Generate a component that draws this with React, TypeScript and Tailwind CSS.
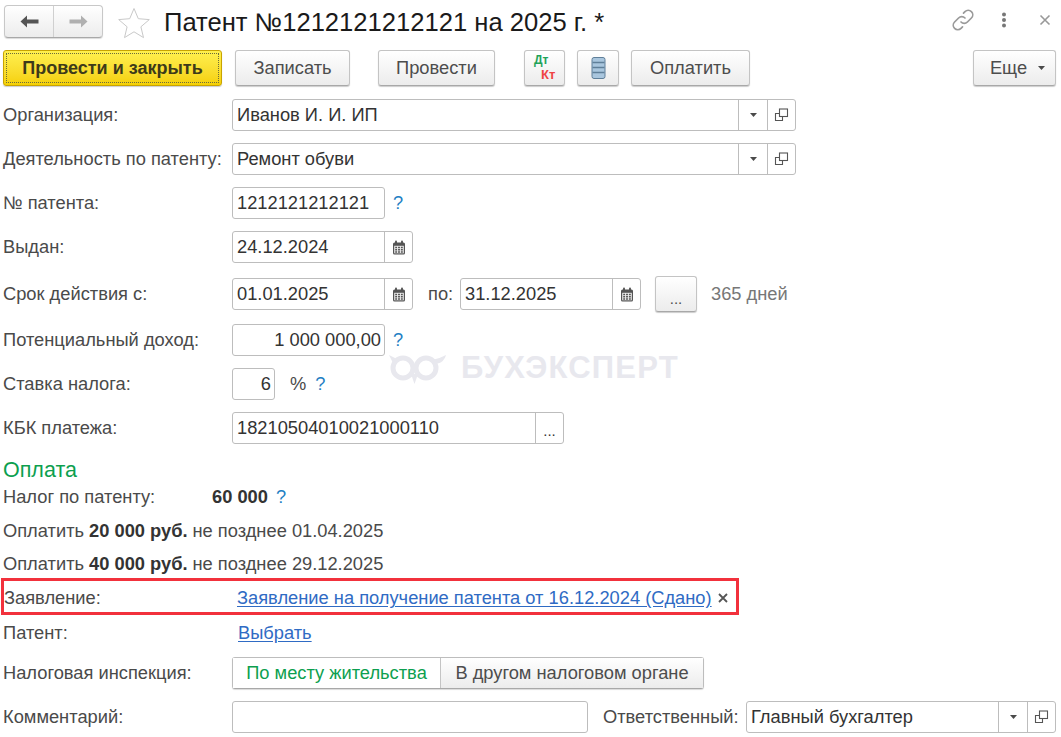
import type { ReactNode } from "react"

const btn =
  "flex h-9 items-center justify-center rounded-[3px] border border-[#c4c4c4] border-b-[#a8a8a8] bg-gradient-to-b from-white to-[#ececec] text-[#4d4d4d] shadow-[0_1px_1px_rgba(0,0,0,0.2)]"
const field = "flex h-8 items-center rounded-[3px] border border-[#bdbdbd] bg-white text-[#333]"

function Arrow({ dir, color }: { dir: "left" | "right"; color: string }) {
  return (
    <svg width="19" height="13" viewBox="0 0 19 13" className={dir === "right" ? "rotate-180" : ""}>
      <path d="M0.500 6.500L7 0.500v4h11.500v4H7v4z" fill={color} />
    </svg>
  )
}

function Caret() {
  return (
    <svg width="7" height="4" viewBox="0 0 7 4">
      <path d="M0 0h7L3.500 4z" fill="#4a4a4a" />
    </svg>
  )
}

function CopyIcon() {
  return (
    <svg width="15" height="14" viewBox="0 0 15 14" fill="none" stroke="#555" strokeWidth="1.1">
      <rect x="5.5" y="1" width="8" height="7.5" />
      <path d="M5.5 5.5H1.5V12.5H8.5V8.5" />
    </svg>
  )
}

function CalendarIcon() {
  return (
    <svg width="14" height="15" viewBox="0 0 14 15">
      <rect x="1" y="2.5" width="12" height="12" rx="1.5" fill="#555" />
      <rect x="2.2" y="5.8" width="9.6" height="7.500" fill="#eee" />
      <rect x="3" y="0.5" width="2" height="4" rx="1" fill="#555" />
      <rect x="9" y="0.5" width="2" height="4" rx="1" fill="#555" />
      <path d="M3.200 6.800h1.900v1.500H3.200zM6.050 6.800h1.900v1.500H6.050zM8.900 6.800h1.900v1.500H8.900zM3.200 9.100h1.900v1.500H3.200zM6.050 9.100h1.900v1.500H6.050zM8.900 9.100h1.900v1.500H8.900zM3.200 11.300h1.900v1.400H3.200zM6.050 11.300h1.900v1.400H6.050zM8.900 11.300h1.900v1.400H8.900z" fill="#555" />
    </svg>
  )
}

function Hint({ className }: { className?: string }) {
  return <span className={`text-[#1f7fc4] ${className ?? ""}`}>?</span>
}

function Label({ children }: { children: ReactNode }) {
  return <span className="w-[229px] shrink-0 whitespace-nowrap text-[#4a4a4a]">{children}</span>
}

function Row({ className, children }: { className: string; children: ReactNode }) {
  return <div className={`flex items-center ${className}`}>{children}</div>
}

function SelectField({ value, className }: { value: string; className: string }) {
  return (
    <div className={`${field} ${className}`}>
      <span className="flex-1 pl-1 whitespace-nowrap">{value}</span>
      <span className="flex h-full w-[29px] items-center justify-center border-l border-[#bdbdbd]"><Caret /></span>
      <span className="flex h-full w-7 items-center justify-center border-l border-[#bdbdbd]"><CopyIcon /></span>
    </div>
  )
}

function DateField({ value, className }: { value: string; className?: string }) {
  return (
    <div className={`${field} w-[181px] ${className ?? ""}`}>
      <span className="flex-1 pl-1">{value}</span>
      <span className="flex h-full w-7 items-center justify-center border-l border-[#bdbdbd]"><CalendarIcon /></span>
    </div>
  )
}

export default function App() {
  return (
    <div className="relative h-[737px] w-[1061px] overflow-hidden bg-white font-['Liberation_Sans',Arial,sans-serif] text-[18.3px] text-[#333]">
      {/* Header */}
      <div className="flex h-[50px] items-start pt-[5px] pl-1">
        <div className="flex h-[33px] w-[99px] rounded-[4px] border border-[#c8c8c8] border-b-[#a8a8a8] bg-gradient-to-b from-white to-[#ececec] shadow-[0_1px_1px_rgba(0,0,0,0.15)]">
          <span className="flex w-[49px] items-center justify-center border-r border-[#d0d0d0]"><Arrow dir="left" color="#555" /></span>
          <span className="flex flex-1 items-center justify-center"><Arrow dir="right" color="#b0b0b0" /></span>
        </div>
        <svg width="32" height="32" viewBox="0 0 32 32" className="mt-0.5 ml-[15px]" fill="none" stroke="#c9c9c9" strokeWidth="1">
          <path d="M16 1.5l4.3 10.2 11 .9-8.4 7.2 2.6 10.8L16 24.8 6.500 30.600l2.600-10.800L.7 12.600l11-.9z" />
        </svg>
        <h1 className="ml-[14px] -mt-px text-[25.6px] leading-9 whitespace-nowrap text-[#1a1a1a]">Патент №1212121212121 на 2025 г. *</h1>
        <div className="ml-auto flex items-center pt-[3px] pr-[10px]">
          <svg width="24" height="24" viewBox="0 0 24 24" fill="none" stroke="#9a9a9a" strokeWidth="1.7" strokeLinecap="round">
            <path d="M10 14a4.500 4.500 0 0 0 6.400 0l4-4a4.500 4.500 0 0 0-6.400-6.400l-1.500 1.500" />
            <path d="M14 10a4.500 4.500 0 0 0-6.400 0l-4 4a4.500 4.500 0 0 0 6.400 6.400l1.500-1.500" />
          </svg>
          <svg width="6" height="16" viewBox="0 0 6 16" className="ml-[26px]" fill="#777">
            <circle cx="3" cy="2.500" r="2" />
            <circle cx="3" cy="8" r="2" />
            <circle cx="3" cy="13.500" r="2" />
          </svg>
          <svg width="12" height="12" viewBox="0 0 12 12" className="ml-[32px]" stroke="#999" strokeWidth="1.6">
            <path d="M1.500 1.500l9 9M10.500 1.500l-9 9" />
          </svg>
        </div>
      </div>

      {/* Toolbar */}
      <div className="flex h-9 pr-[5px] pl-[3px]">
        <button className="flex h-9 w-[219px] items-center justify-center rounded-[3px] border border-[#c9a400] bg-gradient-to-b from-[#fff04d] to-[#f5d000] p-0.5 shadow-[0_1px_1px_rgba(0,0,0,0.2)]">
          <span className="flex h-full w-full items-center justify-center border border-dotted border-[#6b6b3a] text-[18px] font-bold text-[#3d3a1a]">Провести и закрыть</span>
        </button>
        <button className={`${btn} ml-[13px] w-[115px]`}>Записать</button>
        <button className={`${btn} ml-[28px] w-[117px]`}>Провести</button>
        <button className={`${btn} relative ml-[29px] w-[41px]`}>
          <span className="absolute top-[3px] left-[9px] text-[12px] leading-3 font-bold text-[#1fa35a]">Дт</span>
          <span className="absolute top-[18px] left-[16px] text-[13px] leading-3 font-bold text-[#ef4444]">Кт</span>
        </button>
        <button className={`${btn} ml-3 w-[42px]`}>
          <svg width="15" height="22" viewBox="0 0 15 22">
            <rect x="1" y="0.500" width="13" height="21" rx="2" fill="#a9c6de" stroke="#5f7f99" />
            <path d="M1.500 5.500h12M1.500 10.500h12M1.500 15.500h12" stroke="#5f7f99" strokeWidth="1.500" />
          </svg>
        </button>
        <button className={`${btn} ml-3 w-[119px]`}>Оплатить</button>
        <button className={`${btn} ml-auto w-[83px] gap-[11px] pl-1.5`}>Еще <Caret /></button>
      </div>

      {/* Form */}
      <div className="pl-[3px]">
        <Row className="mt-[13px]">
          <Label>Организация:</Label>
          <SelectField value="Иванов И. И. ИП" className="w-[564px]" />
        </Row>
        <Row className="mt-3">
          <Label>Деятельность по патенту:</Label>
          <SelectField value="Ремонт обуви" className="w-[564px]" />
        </Row>
        <Row className="mt-3">
          <Label>№ патента:</Label>
          <div className={`${field} w-[153px] pl-1`}>1212121212121</div>
          <Hint className="ml-2" />
        </Row>
        <Row className="mt-3">
          <Label>Выдан:</Label>
          <DateField value="24.12.2024" />
        </Row>
        <Row className="mt-[13px]">
          <Label>Срок действия с:</Label>
          <DateField value="01.01.2025" />
          <span className="ml-[15px] w-[32px] text-[#4a4a4a]">по:</span>
          <DateField value="31.12.2025" />
          <button className={`${btn} ml-[14px] w-[42px] items-end pb-1 text-[15px] leading-4`}>...</button>
          <span className="ml-[14px] text-[#777]">365 дней</span>
        </Row>
        <Row className="mt-3">
          <Label>Потенциальный доход:</Label>
          <div className={`${field} w-[153px] justify-end pr-[3px]`}>1 000 000,00</div>
          <Hint className="ml-2" />
        </Row>
        <Row className="mt-3">
          <Label>Ставка налога:</Label>
          <div className={`${field} w-[43px] justify-end pr-[3px]`}>6</div>
          <span className="ml-[15px] text-[#4a4a4a]">%</span>
          <Hint className="ml-[9px]" />
        </Row>
        <Row className="mt-3">
          <Label>КБК платежа:</Label>
          <div className={`${field} w-[332px]`}>
            <span className="flex-1 pl-1">18210504010021000110</span>
            <span className="flex h-full w-7 items-end justify-center border-l border-[#bdbdbd] pb-1 text-[15px] leading-4">...</span>
          </div>
        </Row>
        <Row className="mt-3.5 h-6 text-[21.5px] text-[#0d9f4f]">Оплата</Row>
        <Row className="mt-[3px] h-6">
          <span className="w-[209px] text-[#4a4a4a]">Налог по патенту:</span>
          <b className="text-[#333]">60 000</b>
          <Hint className="ml-2" />
        </Row>
        <Row className="mt-2.5 h-6 gap-[5px] text-[#4a4a4a]">
          Оплатить <b className="text-[#333]">20 000 руб.</b> не позднее 01.04.2025
        </Row>
        <Row className="mt-[9px] h-6 gap-[5px] text-[#4a4a4a]">
          Оплатить <b className="text-[#333]">40 000 руб.</b> не позднее 29.12.2025
        </Row>
        <Row className="mt-0.5 -ml-0.5 h-[37px] w-[738px] border-[3px] border-[#f2313c] pt-[3px]">
          <span className="w-[233px] shrink-0 text-[#4a4a4a]">Заявление:</span>
          <a className="whitespace-nowrap text-[#2f6bc4] underline underline-offset-2">Заявление на получение патента от 16.12.2024 (Сдано)</a>
          <svg width="10" height="10" viewBox="0 0 10 10" className="ml-[6px]" stroke="#555" strokeWidth="1.800">
            <path d="M1 1l8 8M9 1L1 9" />
          </svg>
        </Row>
        <Row className="mt-1.5 h-6">
          <Label>Патент:</Label>
          <a className="ml-1.5 text-[#2f6bc4] underline underline-offset-2">Выбрать</a>
        </Row>
        <Row className="mt-3">
          <Label>Налоговая инспекция:</Label>
          <div className="flex h-8 w-[472px] rounded-[3px] border border-[#bdbdbd] border-b-[#a8a8a8] shadow-[0_1px_1px_rgba(0,0,0,0.15)]">
            <span className="flex w-[208px] items-center justify-center border-r border-[#c4c4c4] bg-white text-[#0d9f4f]">По месту жительства</span>
            <span className="flex flex-1 items-center justify-center bg-gradient-to-b from-white to-[#ececec] text-[#4d4d4d]">В другом налоговом органе</span>
          </div>
        </Row>
        <Row className="mt-3">
          <Label>Комментарий:</Label>
          <div className={`${field} w-[356px]`} />
          <span className="ml-[15px] w-[143px] whitespace-nowrap text-[#4a4a4a]">Ответственный:</span>
          <SelectField value="Главный бухгалтер" className="w-[310px]" />
        </Row>
      </div>

      {/* Watermark */}
      <div className="pointer-events-none absolute top-[352px] left-[388px] flex items-center gap-[11px]">
        <svg width="62" height="32" viewBox="0 0 62 32" fill="none">
          <circle cx="15" cy="16" r="10" stroke="#e8e8ee" strokeWidth="5" />
          <circle cx="38" cy="16" r="10" stroke="#e8e8ee" strokeWidth="5" />
          <path d="M1 3l10 5-5 5zM58 3c-2 7-7 9-12 9l-2-4c5-1 10-3 14-5zM23 22h7l-3.500 10z" fill="#e8e8ee" />
        </svg>
        <span className="text-[31px] leading-8 font-bold tracking-[1.2px] text-[#e8e8ee]">БУХЭКСПЕРТ</span>
      </div>
    </div>
  )
}
